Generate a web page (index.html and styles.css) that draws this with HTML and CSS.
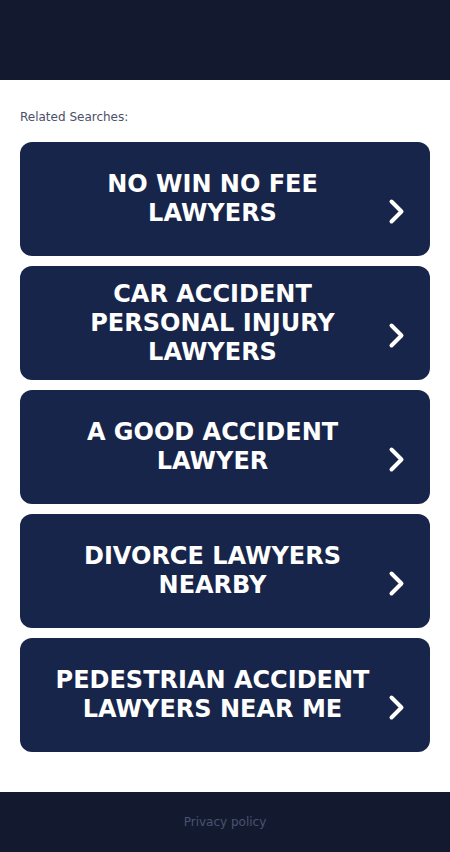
FILE: index.html
```html
<!DOCTYPE html>
<html>
<head>
<meta charset="utf-8">
<link rel="stylesheet" href="styles.css">
</head>
<body>
<header class="top"></header>
<main class="main">
  <div class="label">Related Searches:</div>
  <div class="list">
    <a class="item" href="#"><span class="text">NO WIN NO FEE LAWYERS</span><svg class="chev" viewBox="0 0 20 28"><path d="M4.5 3.5 L14.5 13.5 L4.5 23.5" fill="none" stroke="#fff" stroke-width="4" stroke-linecap="round" stroke-linejoin="round"/></svg></a>
    <a class="item" href="#"><span class="text">CAR ACCIDENT PERSONAL INJURY LAWYERS</span><svg class="chev" viewBox="0 0 20 28"><path d="M4.5 3.5 L14.5 13.5 L4.5 23.5" fill="none" stroke="#fff" stroke-width="4" stroke-linecap="round" stroke-linejoin="round"/></svg></a>
    <a class="item" href="#"><span class="text">A GOOD ACCIDENT LAWYER</span><svg class="chev" viewBox="0 0 20 28"><path d="M4.5 3.5 L14.5 13.5 L4.5 23.5" fill="none" stroke="#fff" stroke-width="4" stroke-linecap="round" stroke-linejoin="round"/></svg></a>
    <a class="item" href="#"><span class="text">DIVORCE LAWYERS NEARBY</span><svg class="chev" viewBox="0 0 20 28"><path d="M4.5 3.5 L14.5 13.5 L4.5 23.5" fill="none" stroke="#fff" stroke-width="4" stroke-linecap="round" stroke-linejoin="round"/></svg></a>
    <a class="item" href="#"><span class="text">PEDESTRIAN ACCIDENT LAWYERS NEAR ME</span><svg class="chev" viewBox="0 0 20 28"><path d="M4.5 3.5 L14.5 13.5 L4.5 23.5" fill="none" stroke="#fff" stroke-width="4" stroke-linecap="round" stroke-linejoin="round"/></svg></a>
  </div>
</main>
<footer class="foot"><a class="privacy" href="#">Privacy policy</a></footer>
</body>
</html>
```
FILE: styles.css
```css
* { box-sizing: border-box; }
html, body { margin: 0; padding: 0; }
body { font-family: "DejaVu Sans", sans-serif; background: #fff; width: 450px; }
.top { height: 80px; background: #131a2f; }
.main { padding: 29px 20px 40px; }
.label { font-size: 12px; line-height: 16px; color: #4b5068; margin-bottom: 17px; }
.list { display: flex; flex-direction: column; gap: 10px; }
.item { display: flex; align-items: center; height: 114px; border-radius: 12px; background: #18254a; text-decoration: none; color: #fff; padding: 0 23px 0 30px; }
.text { flex: 1; text-align: center; font-weight: bold; font-size: 24px; line-height: 29px; }
.chev { width: 20px; height: 28px; margin-left: 12px; margin-top: 26px; }
.foot { height: 60px; background: #131a2f; display: flex; align-items: center; justify-content: center; }
.privacy { font-size: 12px; color: #4a5370; text-decoration: none; }
```
